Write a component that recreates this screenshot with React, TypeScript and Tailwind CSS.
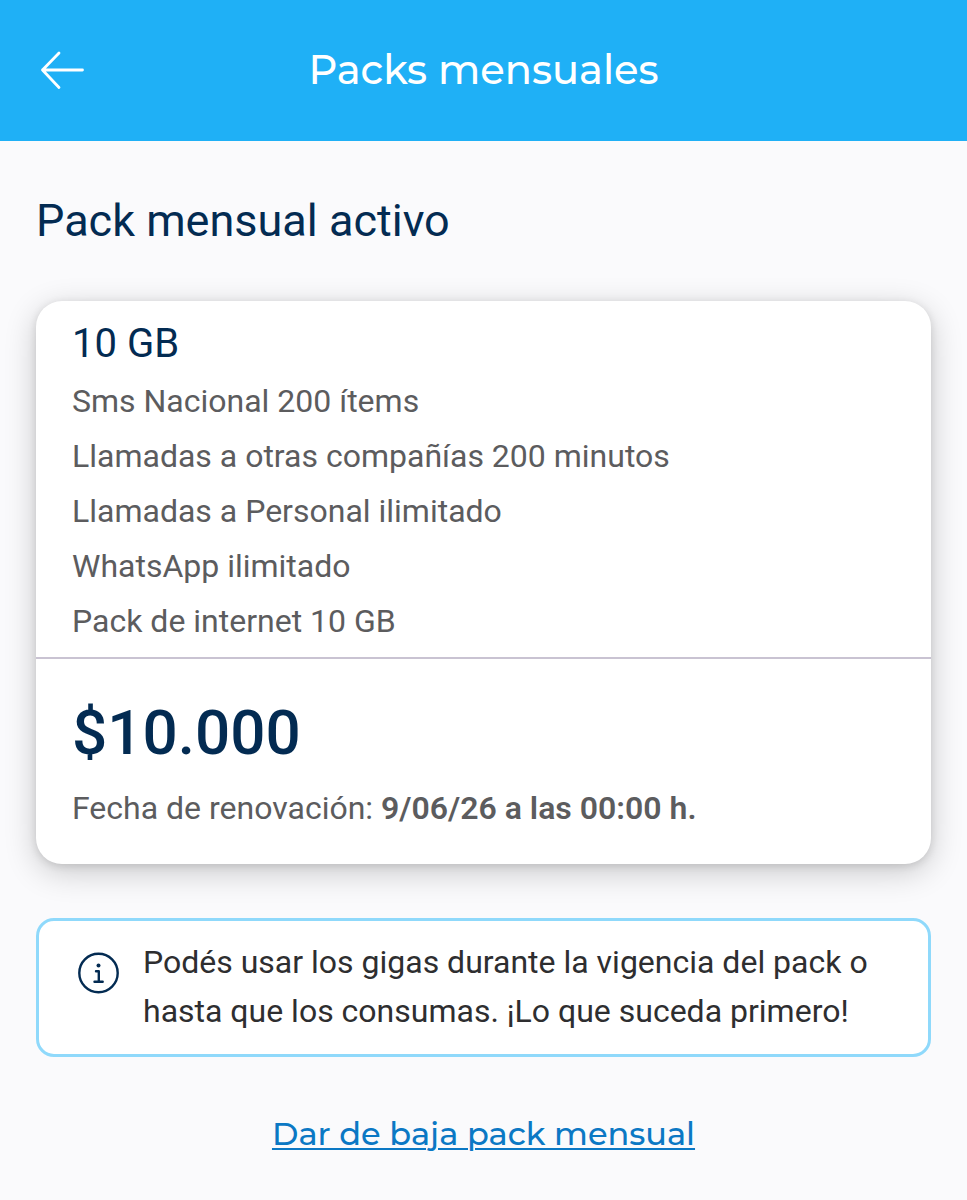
interface Pack {
  name: string;
  benefits: string[];
  price: string;
  renewal: string;
}

const activePack: Pack = {
  name: "10 GB",
  benefits: [
    "Sms Nacional 200 ítems",
    "Llamadas a otras compañías 200 minutos",
    "Llamadas a Personal ilimitado",
    "WhatsApp ilimitado",
    "Pack de internet 10 GB",
  ],
  price: "$10.000",
  renewal: "9/06/26 a las 00:00 h.",
};

function ArrowIcon() {
  return (
    <svg
      className="w-11 h-10"
      viewBox="0 0 44 40"
      fill="none"
      stroke="currentColor"
      strokeWidth="2.8"
      strokeLinecap="round"
      strokeLinejoin="round"
    >
      <path d="M42.5 20H2.5M19 3L2.5 20L19 37.5" />
    </svg>
  );
}

function InfoIcon() {
  return (
    <svg
      className="w-[42px] h-[42px] shrink-0 text-[#032b52]"
      viewBox="0 0 42 42"
      fill="none"
      stroke="currentColor"
      strokeWidth="2.4"
      strokeLinecap="round"
      strokeLinejoin="round"
    >
      <circle cx="21.5" cy="21" r="19.2" />
      <circle cx="21.5" cy="13.5" r="2" fill="currentColor" stroke="none" />
      <path d="M19 19.3H21.8V29.8M17.5 29.8H25.7" />
    </svg>
  );
}

function Header() {
  return (
    <header className="grid grid-cols-[44px_1fr_44px] items-center bg-[#1fb0f6] px-10 pb-px h-[141px] text-white">
      <button type="button" aria-label="Volver" className="cursor-pointer">
        <ArrowIcon />
      </button>
      <h1 className="text-center text-[40px] leading-[56px] font-medium font-['Montserrat','Inter',sans-serif]">
        Packs mensuales
      </h1>
    </header>
  );
}

function PackCard({ pack }: { pack: Pack }) {
  return (
    <section className="rounded-[26px] bg-white shadow-[0_8px_32px_rgba(0,0,0,0.2),0_2px_8px_rgba(0,0,0,0.12)]">
      {/* benefits */}
      <div className="px-9 pt-[15px] pb-2 border-b-2 border-[#c9c3d2]">
        <h3 className="text-[40px] leading-[56px] text-[#032b52]">{pack.name}</h3>
        <ul className="pt-[2px]">
          {pack.benefits.map((benefit) => (
            <li key={benefit} className="text-[32px] leading-[55px]">
              {benefit}
            </li>
          ))}
        </ul>
      </div>

      {/* price */}
      <div className="px-9 pt-[34px] pb-7">
        <p className="text-[62px] leading-[80px] font-medium text-[#032b52]">
          {pack.price}
        </p>
        <p className="pt-2 text-[32px] leading-[55px]">
          Fecha de renovación:{" "}
          <strong className="font-semibold">{pack.renewal}</strong>
        </p>
      </div>
    </section>
  );
}

export default function App() {
  return (
    <div className="min-h-screen bg-[#fafafc] text-[#5c5c5e] font-['Roboto',sans-serif]">
      <Header />
      <main className="px-9 pt-12 pb-10">
        <h2 className="text-[45px] leading-[64px] text-[#032b52]">
          Pack mensual activo
        </h2>

        <div className="pt-12">
          <PackCard pack={activePack} />
        </div>

        {/* notice */}
        <div className="mt-[54px] flex gap-6 rounded-[18px] border-[3px] border-[#8fd9fb] bg-white pt-[17px] pb-[18px] pl-[38px] pr-8 text-[#2e2e30]">
          <div className="pt-[14px]">
            <InfoIcon />
          </div>
          <p className="text-[32px] leading-[49px]">
            Podés usar los gigas durante la vigencia del pack o hasta que los
            consumas. ¡Lo que suceda primero!
          </p>
        </div>

        <div className="pt-[53px] text-center">
          <a
            href="#baja"
            className="text-[32px] leading-[48px] font-medium text-[#0b78c4] underline decoration-2 underline-offset-3 font-['Montserrat','Inter',sans-serif]"
          >
            Dar de baja pack mensual
          </a>
        </div>
      </main>
    </div>
  );
}
